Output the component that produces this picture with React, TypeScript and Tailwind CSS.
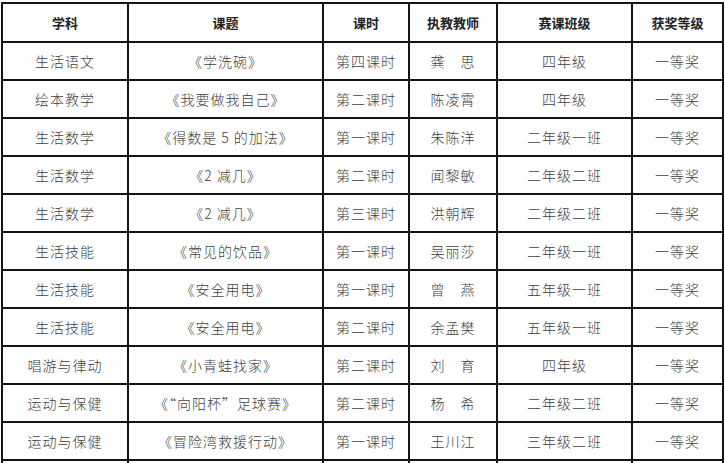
const headers = ["学科", "课题", "课时", "执教教师", "赛课班级", "获奖等级"];

const rows: string[][] = [
  ["生活语文", "《学洗碗》", "第四课时", "龚　思", "四年级", "一等奖"],
  ["绘本教学", "《我要做我自己》", "第二课时", "陈凌霄", "四年级", "一等奖"],
  ["生活数学", "《得数是 5 的加法》", "第一课时", "朱陈洋", "二年级一班", "一等奖"],
  ["生活数学", "《2 减几》", "第二课时", "闻黎敏", "二年级二班", "一等奖"],
  ["生活数学", "《2 减几》", "第三课时", "洪朝辉", "二年级二班", "一等奖"],
  ["生活技能", "《常见的饮品》", "第一课时", "吴丽莎", "二年级一班", "一等奖"],
  ["生活技能", "《安全用电》", "第一课时", "曾　燕", "五年级一班", "一等奖"],
  ["生活技能", "《安全用电》", "第二课时", "余孟樊", "五年级一班", "一等奖"],
  ["唱游与律动", "《小青蛙找家》", "第二课时", "刘　育", "四年级", "一等奖"],
  ["运动与保健", "《“向阳杯”足球赛》", "第二课时", "杨　希", "二年级二班", "一等奖"],
  ["运动与保健", "《冒险湾救援行动》", "第一课时", "王川江", "三年级二班", "一等奖"],
];

// column widths measured off the reference grid lines
const widths = ["w-[126px]", "w-[195px]", "w-[86px]", "w-[88px]", "w-[135px]", "w-[91px]"];

export default function App() {
  return (
    <div className="w-[725px] h-[463px] overflow-hidden bg-white pt-[2px] pl-[1px] font-['Noto_Sans_CJK_SC','Noto_Sans',sans-serif] text-[#404040]">
      <table className="table-fixed border-collapse">
        <colgroup>
          {widths.map((w) => (
            <col key={w} className={w} />
          ))}
        </colgroup>
        <thead>
          <tr className="h-[39px]">
            {headers.map((h) => (
              <th
                key={h}
                className="border-2 border-[#141414] text-center text-[13px] font-bold text-[#222222]"
              >
                {h}
              </th>
            ))}
          </tr>
        </thead>
        <tbody>
          {rows.map((row, i) => (
            <tr key={i} className="h-[38px]">
              {row.map((cell, j) => (
                <td
                  key={j}
                  className="border-2 border-[#141414] text-center text-[14px] font-light tracking-[1px] whitespace-nowrap"
                >
                  {cell}
                </td>
              ))}
            </tr>
          ))}
          <tr className="h-[38px]">
            {headers.map((h) => (
              <td key={h} className="border-2 border-[#141414]" />
            ))}
          </tr>
        </tbody>
      </table>
    </div>
  );
}
